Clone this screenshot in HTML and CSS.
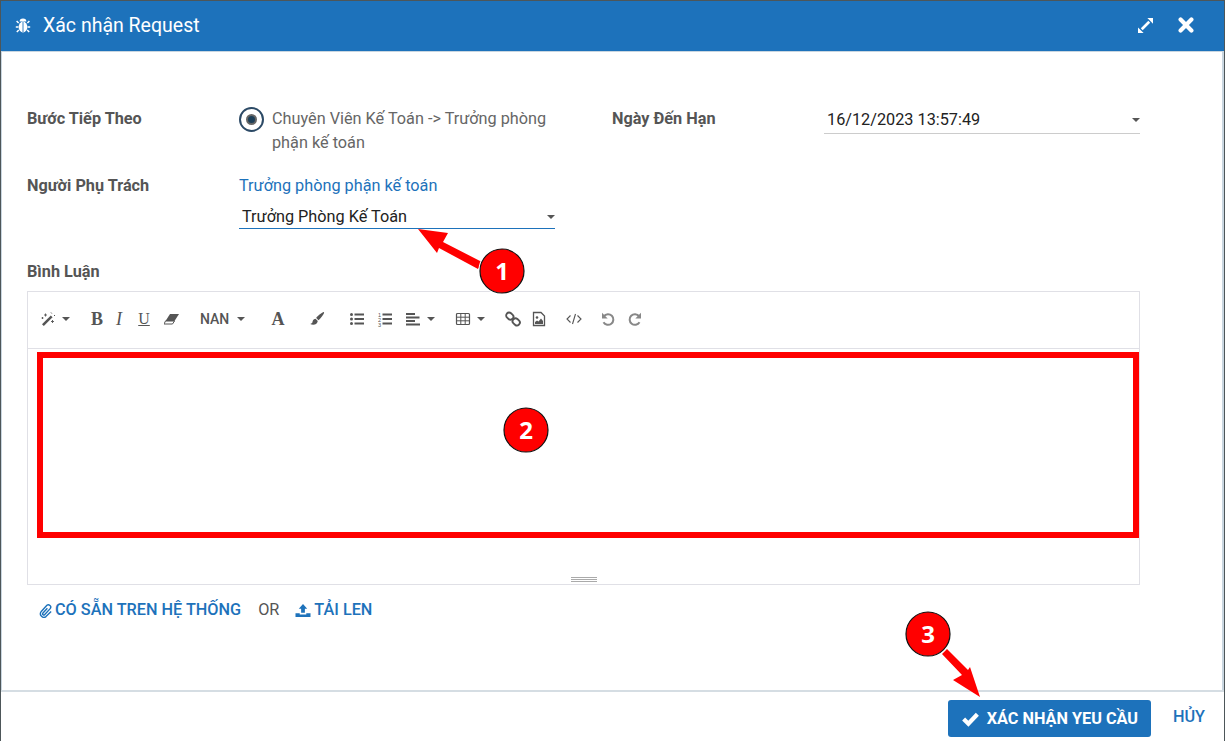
FILE: index.html
```html
<!DOCTYPE html>
<html>
	<head>
		<meta charset="UTF-8">
		<title>Xác nhận Request</title>
		<link rel="stylesheet" href="styles.css">
	</head>
	<body>
		<div class="modal">
			<!--header-->
			<div class="modal-head">
				<svg class="ic-bug" viewBox="0 0 16 16"><ellipse cx="8" cy="10" rx="4.4" ry="5.4" fill="#fff"/><path d="M4.6 4.6a3.4 3 0 0 1 6.8 0z" fill="#fff"/><path d="M8 5v10" stroke="#1d72bb" stroke-width=".9"/><path d="M3.6 6 1.6 4M12.4 6l2-2M3.4 10H.8M12.6 10h2.6M3.8 13l-2 2M12.2 13l2 2" stroke="#fff" stroke-width="1.5" fill="none"/></svg>
				<span class="modal-title">Xác nhận Request</span>
				<svg class="ic-expand" viewBox="0 0 16 16"><path d="M4 12 12 4" stroke="#fff" stroke-width="2.800"/><path d="M10 0h6v6zM6 16H0v-6z" fill="#fff"/></svg>
				<svg class="ic-close" viewBox="0 0 16 16"><path d="M2.600 2.600 13.400 13.400M13.400 2.600 2.600 13.400" stroke="#fff" stroke-width="4.200" stroke-linecap="round"/></svg>
			</div>

			<div class="modal-body">
				<div class="form-grid">
					<div class="lbl">Bước Tiếp Theo</div>
					<div class="radio-row">
						<span class="radio"><span class="radio-dot"></span></span>
						<span class="radio-text">Chuyên Viên Kế Toán -&gt; Trưởng phòng phận kế toán</span>
					</div>
					<div></div>
					<div class="lbl">Ngày Đến Hạn</div>
					<div class="select select-date">
						<span>16/12/2023 13:57:49</span>
						<span class="caret"></span>
					</div>

					<div class="lbl">Người Phụ Trách</div>
					<div>
						<div class="dept">Trưởng phòng phận kế toán</div>
						<div class="select select-active">
							<span>Trưởng Phòng Kế Toán</span>
							<span class="caret"></span>
						</div>
					</div>
				</div>

				<div class="lbl lbl-comment">Bình Luận</div>
				<div class="editor">
					<div class="toolbar">
						<svg class="ic tb-wand" viewBox="0 0 16 16"><path d="M2 13.200 10.800 4.400l1.800 1.800-8.800 8.800z" fill="#555"/><path d="M5.500 2.500v3M4 4h3M12.500 9v3M11 10.500h3M2.500 6v2M1.500 7h2" stroke="#555" stroke-width=".9"/><path d="M11 1.500l.8 1M14 4.200l1 .6" stroke="#555"/></svg>
						<span class="caret tb-c1"></span>
						<span class="tb-txt tb-b">B</span>
						<span class="tb-txt tb-i">I</span>
						<span class="tb-txt tb-u">U</span>
						<svg class="ic tb-erase" viewBox="0 0 16 16"><path d="M6 3h9l-4.500 7H1.500z" fill="#555"/><path d="M1.500 10h9l-2 3h-8.500z" fill="#fff" stroke="#555"/></svg>
						<span class="tb-size">NAN</span>
						<span class="caret tb-c2"></span>
						<span class="tb-txt tb-a">A</span>
						<svg class="ic tb-brush" viewBox="0 0 16 16"><path d="M15 1.200c.8.800-3.500 6.600-5.500 8L7.200 7C8.500 5 14.200.4 15 1.200z" fill="#555"/><path d="M6.500 7.800c-2.300.2-2.800 2-3 3.300-.2 1-1 1.500-2.200 1.900 2 1.300 6.700 1.500 7.500-3z" fill="#555"/></svg>
						<svg class="ic tb-ul" viewBox="0 0 16 16"><path d="M5.500 3.500H15M5.500 8H15M5.500 12.500H15" stroke="#555" stroke-width="2"/><circle cx="2.500" cy="3.500" r="1.500" fill="#555"/><circle cx="2.500" cy="8" r="1.500" fill="#555"/><circle cx="2.500" cy="12.500" r="1.500" fill="#555"/></svg>
						<svg class="ic tb-ol" viewBox="0 0 16 16"><path d="M5.500 3.500H15M5.500 8H15M5.500 12.500H15" stroke="#555" stroke-width="2"/><text x="1" y="5.500" class="ol-num">1</text><text x="1" y="10.500" class="ol-num">2</text><text x="1" y="15.500" class="ol-num">3</text></svg>
						<svg class="ic tb-align" viewBox="0 0 16 16"><path d="M1 3h9M1 6.500h13.500M1 10h9M1 13.500h14" stroke="#555" stroke-width="1.800"/></svg>
						<span class="caret tb-c3"></span>
						<svg class="ic tb-table" viewBox="0 0 16 16"><rect x="1.500" y="2.500" width="13" height="11" rx="1" fill="none" stroke="#555" stroke-width="1.200"/><path d="M1.500 6.200h13M1.500 9.800h13M5.800 2.500v11M10.200 2.500v11" stroke="#555"/></svg>
						<span class="caret tb-c4"></span>
						<svg class="ic tb-link" viewBox="0 0 16 16"><rect x="1" y="2.200" width="7.600" height="5.800" rx="2.800" transform="rotate(42 4.800 5.100)" fill="none" stroke="#555" stroke-width="1.900"/><rect x="7.400" y="8" width="7.600" height="5.800" rx="2.800" transform="rotate(42 11.200 10.900)" fill="none" stroke="#555" stroke-width="1.900"/></svg>
						<svg class="ic tb-image" viewBox="0 0 16 16"><path d="M2.500 1.500h7.500l3.500 3.500v9.500h-11z" fill="none" stroke="#555" stroke-width="1.300"/><circle cx="6" cy="6.500" r="1.300" fill="#555"/><path d="M4 13v-2l2-1.500 1.500 1 2.500-3 2 2.500V13z" fill="#555"/></svg>
						<svg class="ic tb-code" viewBox="0 0 16 16"><path d="M4.500 4.500 1 8l3.500 3.500M11.500 4.500 15 8l-3.500 3.500M9.500 3 6.500 13" fill="none" stroke="#555" stroke-width="1.100"/></svg>
						<svg class="ic tb-undo" viewBox="0 0 16 16"><path d="M3.900 5.200a5.300 5.300 0 1 1-.4 6" fill="none" stroke="#888" stroke-width="2"/><path d="M2 1.800v5.700h5.700z" fill="#888"/></svg>
						<svg class="ic tb-redo" viewBox="0 0 16 16"><path d="M12.100 5.200a5.300 5.300 0 1 0 .4 6" fill="none" stroke="#888" stroke-width="2"/><path d="M14 1.800v5.700H8.300z" fill="#888"/></svg>
					</div>
					<div class="editor-area"></div>
					<div class="resize-bar"><span></span><span></span><span></span></div>
				</div>

				<div class="attach">
					<a class="attach-link">
						<svg class="ic-clip" viewBox="0 0 16 16"><path d="M14 9 8.500 14.500c-3 2.500-8-1.500-5-5.500L9.500 2.500c2-2 5.500 1 3.500 3.500L7 12.500c-1 1-2.800-.4-1.700-1.800L10 5.500" fill="none" stroke="#1d72bb" stroke-width="1.500"/></svg>
						CÓ SẴN TREN HỆ THỐNG
					</a>
					<span class="attach-or">OR</span>
					<a class="attach-link">
						<svg class="ic-upload" viewBox="0 0 16 16"><path d="M8 1 3.500 6H6v4.500h4V6h2.500z" fill="#1d72bb"/><path d="M0 11h4.500v1.200h7V11H16v4H0z" fill="#1d72bb"/></svg>
						TẢI LEN
					</a>
				</div>
			</div>

			<div class="modal-foot">
				<button class="btn-ok">
					<svg class="ic-check" viewBox="0 0 18 16"><path d="M2.500 8.500 7 13 15.500 4" fill="none" stroke="#fff" stroke-width="4"/></svg>
					XÁC NHẬN YEU CẦU
				</button>
				<a class="btn-cancel">HỦY</a>
			</div>
		</div>

		<!--phần chú thích màu đỏ nằm trên giao diện-->
		<svg class="notes" viewBox="0 0 1225 741">
			<rect x="40" y="355" width="1096" height="180" fill="none" stroke="#f00" stroke-width="6"/>
			<path d="M418 229 448 233 443 242 482 262 478 269 439 248 437 253z" fill="#f00"/>
			<path d="M980 697 953 680 962 675 942 654 947 649 968 670 970 667z" fill="#f00"/>
			<g class="badge">
				<circle class="ring" cx="502" cy="271" r="23"/>
				<circle cx="502" cy="271" r="22"/>
				<text x="502" y="279.500">1</text>
			</g>
			<g class="badge">
				<circle class="ring" cx="526" cy="430" r="23"/>
				<circle cx="526" cy="430" r="22"/>
				<text x="526" y="438.500">2</text>
			</g>
			<g class="badge">
				<circle class="ring" cx="928" cy="634" r="23"/>
				<circle cx="928" cy="634" r="22"/>
				<text x="928" y="642.500">3</text>
			</g>
		</svg>
	</body>
</html>
```

FILE: styles.css
```css
*{
	margin: 0;
	padding: 0;
	box-sizing: border-box;
}
html, body{
	height: 741px;
	overflow: hidden;
}
body{
	background-color: #4d5659;
	font-family: Roboto, "Noto Sans", sans-serif;
	font-size: 16.250px;
	color: #555;
	position: relative;
}
.modal{
	margin: 1px 1px 0 1px;
	width: 1223px;
	height: 740px;
	display: flex;
	flex-direction: column;
	background-color: #fff;
}
.modal-head{
	height: 51px;
	flex: none;
	background-color: #1d72bb;
	color: #fff;
	display: flex;
	align-items: center;
	padding: 0 30px 2px 14px;
	border-bottom: 1px solid #c9d6e0;
}
.ic-bug{
	width: 16px;
	height: 16px;
}
.modal-title{
	margin-left: 12px;
	font-size: 19.500px;
	flex: 1;
}
.ic-expand{
	width: 15px;
	height: 15px;
}
.ic-close{
	width: 16px;
	height: 16px;
	margin-left: 25px;
}

.modal-body{
	flex: 1;
	padding: 55px 0 0 25px;
	border-left: 1px solid #c9d6e0;
	border-right: 2px solid #c9d6e0;
}
.form-grid{
	display: grid;
	grid-template-columns: 212px 316px 57px 212px 316px;
	row-gap: 19px;
	line-height: 24px;
}
.lbl{
	font-weight: 700;
	color: #555;
	line-height: 24px;
}
.radio-row{
	display: flex;
	align-items: flex-start;
}
.radio{
	width: 25px;
	height: 25px;
	border: 2px solid #2c4a66;
	border-radius: 50%;
	flex: none;
	display: flex;
	align-items: center;
	justify-content: center;
	margin: 0 8px 0 0;
}
.radio-dot{
	width: 11px;
	height: 11px;
	border-radius: 50%;
	background-color: #1c3f58;
	border: 2px solid #666;
}
.radio-text{
	color: #666;
	width: 280px;
}
.select{
	display: flex;
	align-items: center;
	justify-content: space-between;
	color: #222;
	padding: 0 0 0 3px;
}
.select-date{
	height: 27px;
	padding-bottom: 1px;
	border-bottom: 1px solid #ccc;
}
.select-active{
	height: 31px;
	padding-top: 7px;
	border-bottom: 1px solid #1d72bb;
}
.dept{
	color: #1d72bb;
}
.caret{
	display: block;
	width: 0;
	height: 0;
	border-left: 4px solid transparent;
	border-right: 4px solid transparent;
	border-top: 4px solid #555;
}
.lbl-comment{
	margin-top: 31px;
}

/*editor*/
.editor{
	margin-top: 7px;
	width: 1113px;
	height: 294px;
	border: 1px solid #e0e0e6;
	display: flex;
	flex-direction: column;
}
.toolbar{
	height: 57px;
	flex: none;
	border-bottom: 1px solid #e0e0e6;
	display: flex;
	align-items: center;
	padding: 0 0 2px 12px;
}
.ic{
	width: 16px;
	height: 16px;
	flex: none;
}
.tb-txt{
	font-family: "Liberation Serif", serif;
	color: #555;
	width: 16px;
	text-align: center;
	font-size: 18px;
	font-weight: 700;
	line-height: 20px;
}
.tb-c1{ margin-left: 6px; }
.tb-b{ margin-left: 19px; }
.tb-i{
	margin-left: 6px;
	font-style: italic;
	font-weight: 400;
}
.tb-u{
	margin-left: 9px;
	font-weight: 400;
	font-size: 16px;
	text-decoration: underline;
}
.tb-erase{ margin-left: 12px; }
.tb-size{
	margin-left: 20px;
	width: 30px;
	font-size: 14px;
	font-weight: 500;
	color: #555;
}
.tb-c2{ margin-left: 7px; }
.tb-a{
	margin-left: 25px;
}
.tb-brush{ margin-left: 23px; }
.tb-ul{ margin-left: 24px; }
.tb-ol{ margin-left: 12px; }
.tb-align{ margin-left: 12px; }
.tb-c3{ margin-left: 6px; }
.tb-table{ margin-left: 20px; }
.tb-c4{ margin-left: 6px; }
.tb-link{ margin-left: 20px; }
.tb-image{ margin-left: 10px; }
.tb-code{ margin-left: 19px; }
.tb-undo{ margin-left: 18px; }
.tb-redo{ margin-left: 11px; }
.ol-num{
	font-family: "Liberation Sans", sans-serif;
	font-size: 5.500px;
	fill: #555;
}
.editor-area{
	flex: 1;
}
.resize-bar{
	height: 12px;
	padding-top: 5px;
	display: flex;
	flex-direction: column;
	align-items: center;
	gap: 1px;
}
.resize-bar span{
	display: block;
	width: 26px;
	height: 1px;
	flex: none;
	background-color: #aaa;
}

.attach{
	display: flex;
	align-items: center;
	margin: 13px 0 0 11px;
	line-height: 24px;
}
.attach-link{
	color: #1d72bb;
	font-weight: 500;
	display: flex;
	align-items: center;
}
.attach-or{
	margin: 0 16px 0 17px;
	color: #555;
}
.ic-clip{
	width: 15px;
	height: 15px;
	margin-right: 2px;
}
.ic-upload{
	width: 16px;
	height: 15px;
	margin-right: 3px;
}

.modal-foot{
	flex: none;
	height: 51px;
	border-top: 2px solid #d5dde3;
	display: flex;
	align-items: flex-start;
	justify-content: flex-end;
	padding: 8px 19px 0 0;
}
.btn-ok{
	width: 203px;
	height: 37px;
	background-color: #1d72bb;
	color: #fff;
	border: none;
	border-radius: 3px;
	font-family: inherit;
	font-size: 16.250px;
	font-weight: 700;
	display: flex;
	align-items: center;
	justify-content: center;
}
.ic-check{
	width: 19px;
	height: 17px;
	margin-right: 7px;
}
.btn-cancel{
	color: #1d72bb;
	font-weight: 500;
	margin: 8px 0 0 22px;
	line-height: 18px;
}

/*chú thích*/
.notes{
	position: absolute;
	left: 0;
	top: 0;
	width: 1225px;
	height: 741px;
}
.badge circle{
	fill: #f00;
	stroke: #111;
	stroke-width: 1.200;
}
.badge .ring{
	fill: none;
	stroke: #fff;
}
.badge text{
	font-family: "Open Sans", sans-serif;
	font-weight: 700;
	font-size: 24px;
	fill: #fff;
	text-anchor: middle;
}
```
